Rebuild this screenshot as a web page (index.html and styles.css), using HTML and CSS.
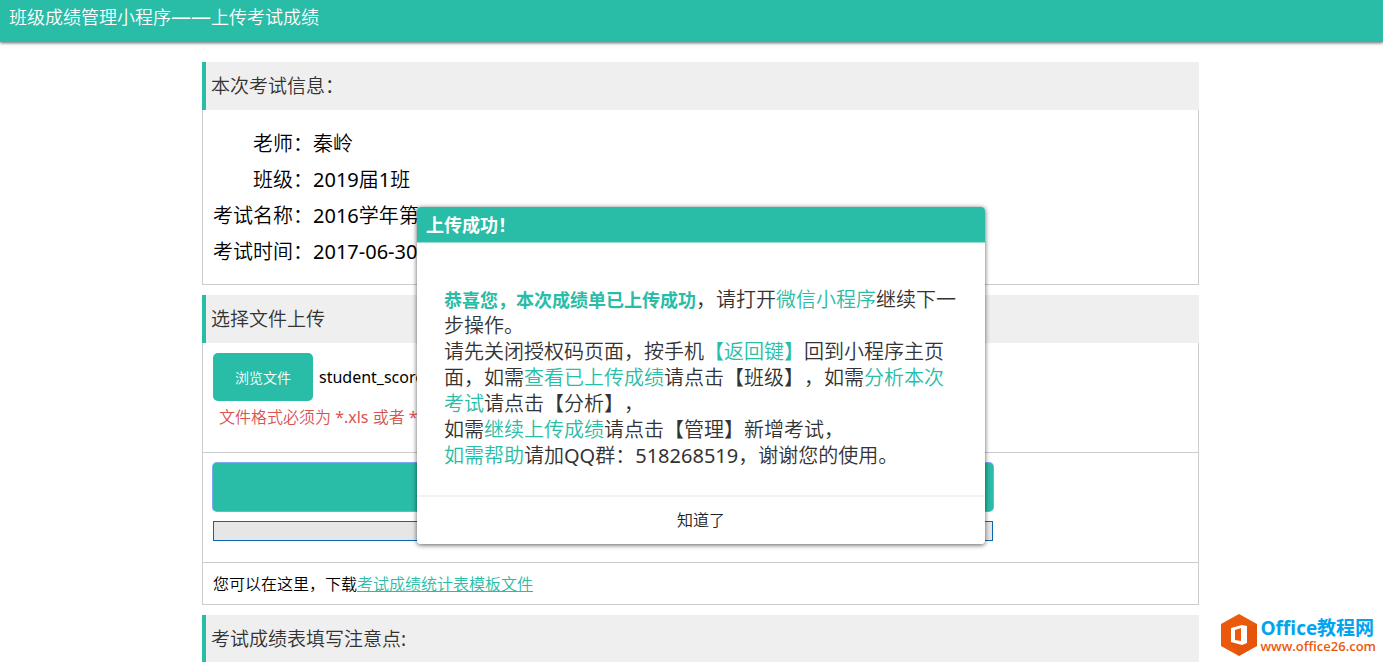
FILE: index.html
```html
<!DOCTYPE html>
<html lang="zh-CN">
<head>
<meta charset="utf-8">
<title>班级成绩管理小程序</title>
<link rel="stylesheet" href="styles.css">
</head>
<body>
<header class="topbar">班级成绩管理小程序<span class="topbar-dash">——</span>上传考试成绩</header>
<main class="page">
  <section class="section">
    <h3 class="section-title">本次考试信息：</h3>
    <dl class="panel info">
      <dt>老师：</dt><dd>秦岭</dd>
      <dt>班级：</dt><dd>2019届1班</dd>
      <dt>考试名称：</dt><dd>2016学年第</dd>
      <dt>考试时间：</dt><dd>2017-06-30</dd>
    </dl>
  </section>
  <section class="section">
    <h3 class="section-title">选择文件上传</h3>
    <div class="panel">
      <div class="row file-row">
        <div class="file-pick">
          <button class="browse" type="button">浏览文件</button>
          <span>student_score.xls</span>
        </div>
        <p class="hint">文件格式必须为 *.xls 或者 *.xlsx</p>
      </div>
      <div class="row upload-row">
        <button class="upload" type="button" aria-label="上传"></button>
        <div class="progress" role="progressbar" aria-label="上传进度"></div>
      </div>
      <p class="download">您可以在这里，下载<a href="#">考试成绩统计表模板文件</a></p>
    </div>
  </section>
  <section class="section">
    <h3 class="section-title">考试成绩表填写注意点:</h3>
  </section>
</main>
<dialog class="dialog" open aria-labelledby="dialog-title">
  <h2 class="dialog-title" id="dialog-title">上传成功！</h2>
  <div class="dialog-body">
    <p><strong>恭喜您，本次成绩单已上传成功</strong>，请打开<em>微信小程序</em>继续下一步操作。</p>
    <p>请先关闭授权码页面，按手机<em>【返回键】</em>回到小程序主页面，如需<em>查看已上传成绩</em>请点击【班级】，如需<em>分析本次考试</em>请点击【分析】，</p>
    <p>如需<em>继续上传成绩</em>请点击【管理】新增考试，</p>
    <p><em>如需帮助</em>请加QQ群：518268519，谢谢您的使用。</p>
  </div>
  <button class="dialog-ok" type="button">知道了</button>
</dialog>
<div class="brand">
  <svg class="brand-logo" viewBox="0 0 36 42" aria-hidden="true">
    <path fill="#eb5a0c" d="M18 0 36 10V32L18 42 0 32V10Z"/>
    <path fill="#d84a08" d="M18 42 36 32V10L26 13V31L10 29Z" opacity=".35"/>
    <path fill="#fff" fill-rule="evenodd" d="M10 14 21 11 26 12V29L21 31 10 28ZM14 16V26L20 27V14Z"/>
  </svg>
  <div class="brand-text">
    <span class="brand-name">Office教程网</span>
    <span class="brand-url">www.office26.com</span>
  </div>
</div>
</body>
</html>
```
FILE: styles.css
```css
* { box-sizing: border-box; }
html, body { height: 100%; }
body {
  margin: 0;
  overflow: hidden;
  background: #fff;
  color: #000;
  font-family: "Noto Sans", "Noto Sans CJK SC DemiLight", "Noto Sans CJK SC", sans-serif;
  font-size: 16px;
  text-spacing-trim: space-all;
}
h2, h3, p, dl, dd { margin: 0; }
button { border: 0; font-family: inherit; }

.topbar {
  height: 42px;
  padding: 3px 9px;
  background: #29bca6;
  color: #fff;
  font-size: 18px;
  line-height: 28px;
  box-shadow: 0 1px 3px rgba(0, 0, 0, .6);
}
.topbar-dash { font-size: 20px; }

.page {
  display: flex;
  flex-direction: column;
  gap: 10px;
  padding: 20px 184px 0 202px;
}
.section-title {
  padding-left: 5px;
  border-left: 4px solid #29bca6;
  background: #efefef;
  color: #333;
  font-size: 19px;
  font-weight: 400;
  line-height: 48px;
}
.panel { border: solid #ccc; border-width: 0 1px 1px; }
.info {
  display: grid;
  grid-template-columns: 100px 1fr;
  padding: 16px 10px 14px;
  font-size: 20px;
  line-height: 36px;
}
.info dt { text-align: right; }

.row { height: 110px; padding: 10px; border-bottom: 1px solid #ccc; }
.file-pick { display: flex; align-items: center; gap: 6px; }
.browse {
  width: 100px;
  height: 48px;
  border-radius: 5px;
  background: #29bca6;
  color: #fff;
  font-size: 14px;
}
.hint { padding: 4px 6px; color: #d9534f; line-height: 24px; }
.upload-row { display: flex; flex-direction: column; gap: 10px; }
.upload, .progress { width: 80%; }
.upload {
  height: 48px;
  border-radius: 4px;
  background: #29bca6;
  box-shadow: 0 0 0 1px #7baaf0;
}
.progress { height: 20px; border: 1px solid #0b66b0; background: #e6e6e6; }
.download { padding: 9px 10px 8px; line-height: 24px; }
.download a { color: #29bca6; }

.dialog {
  position: absolute;
  top: 207px;
  left: 417px;
  width: 568px;
  margin: 0;
  padding: 0;
  border: 0;
  border-radius: 4px;
  overflow: hidden;
  background: #fff;
  color: #333;
  box-shadow: 0 1px 5px rgba(0, 0, 0, .65);
}
.dialog-title {
  padding: 2px 9px 0;
  border-bottom: 1px solid #94ddd2;
  background: #29bca6;
  color: #fff;
  font-family: "Noto Sans", "Noto Sans CJK SC", sans-serif;
  font-size: 18px;
  font-weight: 700;
  line-height: 33px;
}
.dialog-body {
  padding: 44px 28px 26px 27px;
  font-size: 20px;
  line-height: 26px;
}
.dialog-body strong {
  color: #29bca6;
  font-family: "Noto Sans", "Noto Sans CJK SC", sans-serif;
  font-size: 18px;
  font-weight: 700;
  line-height: 20px;
}
.dialog-body em { color: #29bca6; font-style: normal; }
.dialog-ok {
  display: block;
  width: 100%;
  height: 49px;
  padding: 0 4px 4px;
  border-top: 2px solid #f2f2f2;
  background: #fff;
  color: #222;
  font-size: 16px;
}

.brand {
  position: absolute;
  right: 7px;
  bottom: 6px;
  display: flex;
  align-items: center;
  gap: 4px;
}
.brand-logo { width: 36px; height: 42px; }
.brand-text { display: flex; flex-direction: column; font-family: "Open Sans", "Noto Sans CJK SC", sans-serif; }
.brand-name { color: #00a4ef; font-size: 19px; font-weight: 700; line-height: 21px; }
.brand-url { color: #eb5a0c; font-size: 13px; font-weight: 600; line-height: 14px; }
```
